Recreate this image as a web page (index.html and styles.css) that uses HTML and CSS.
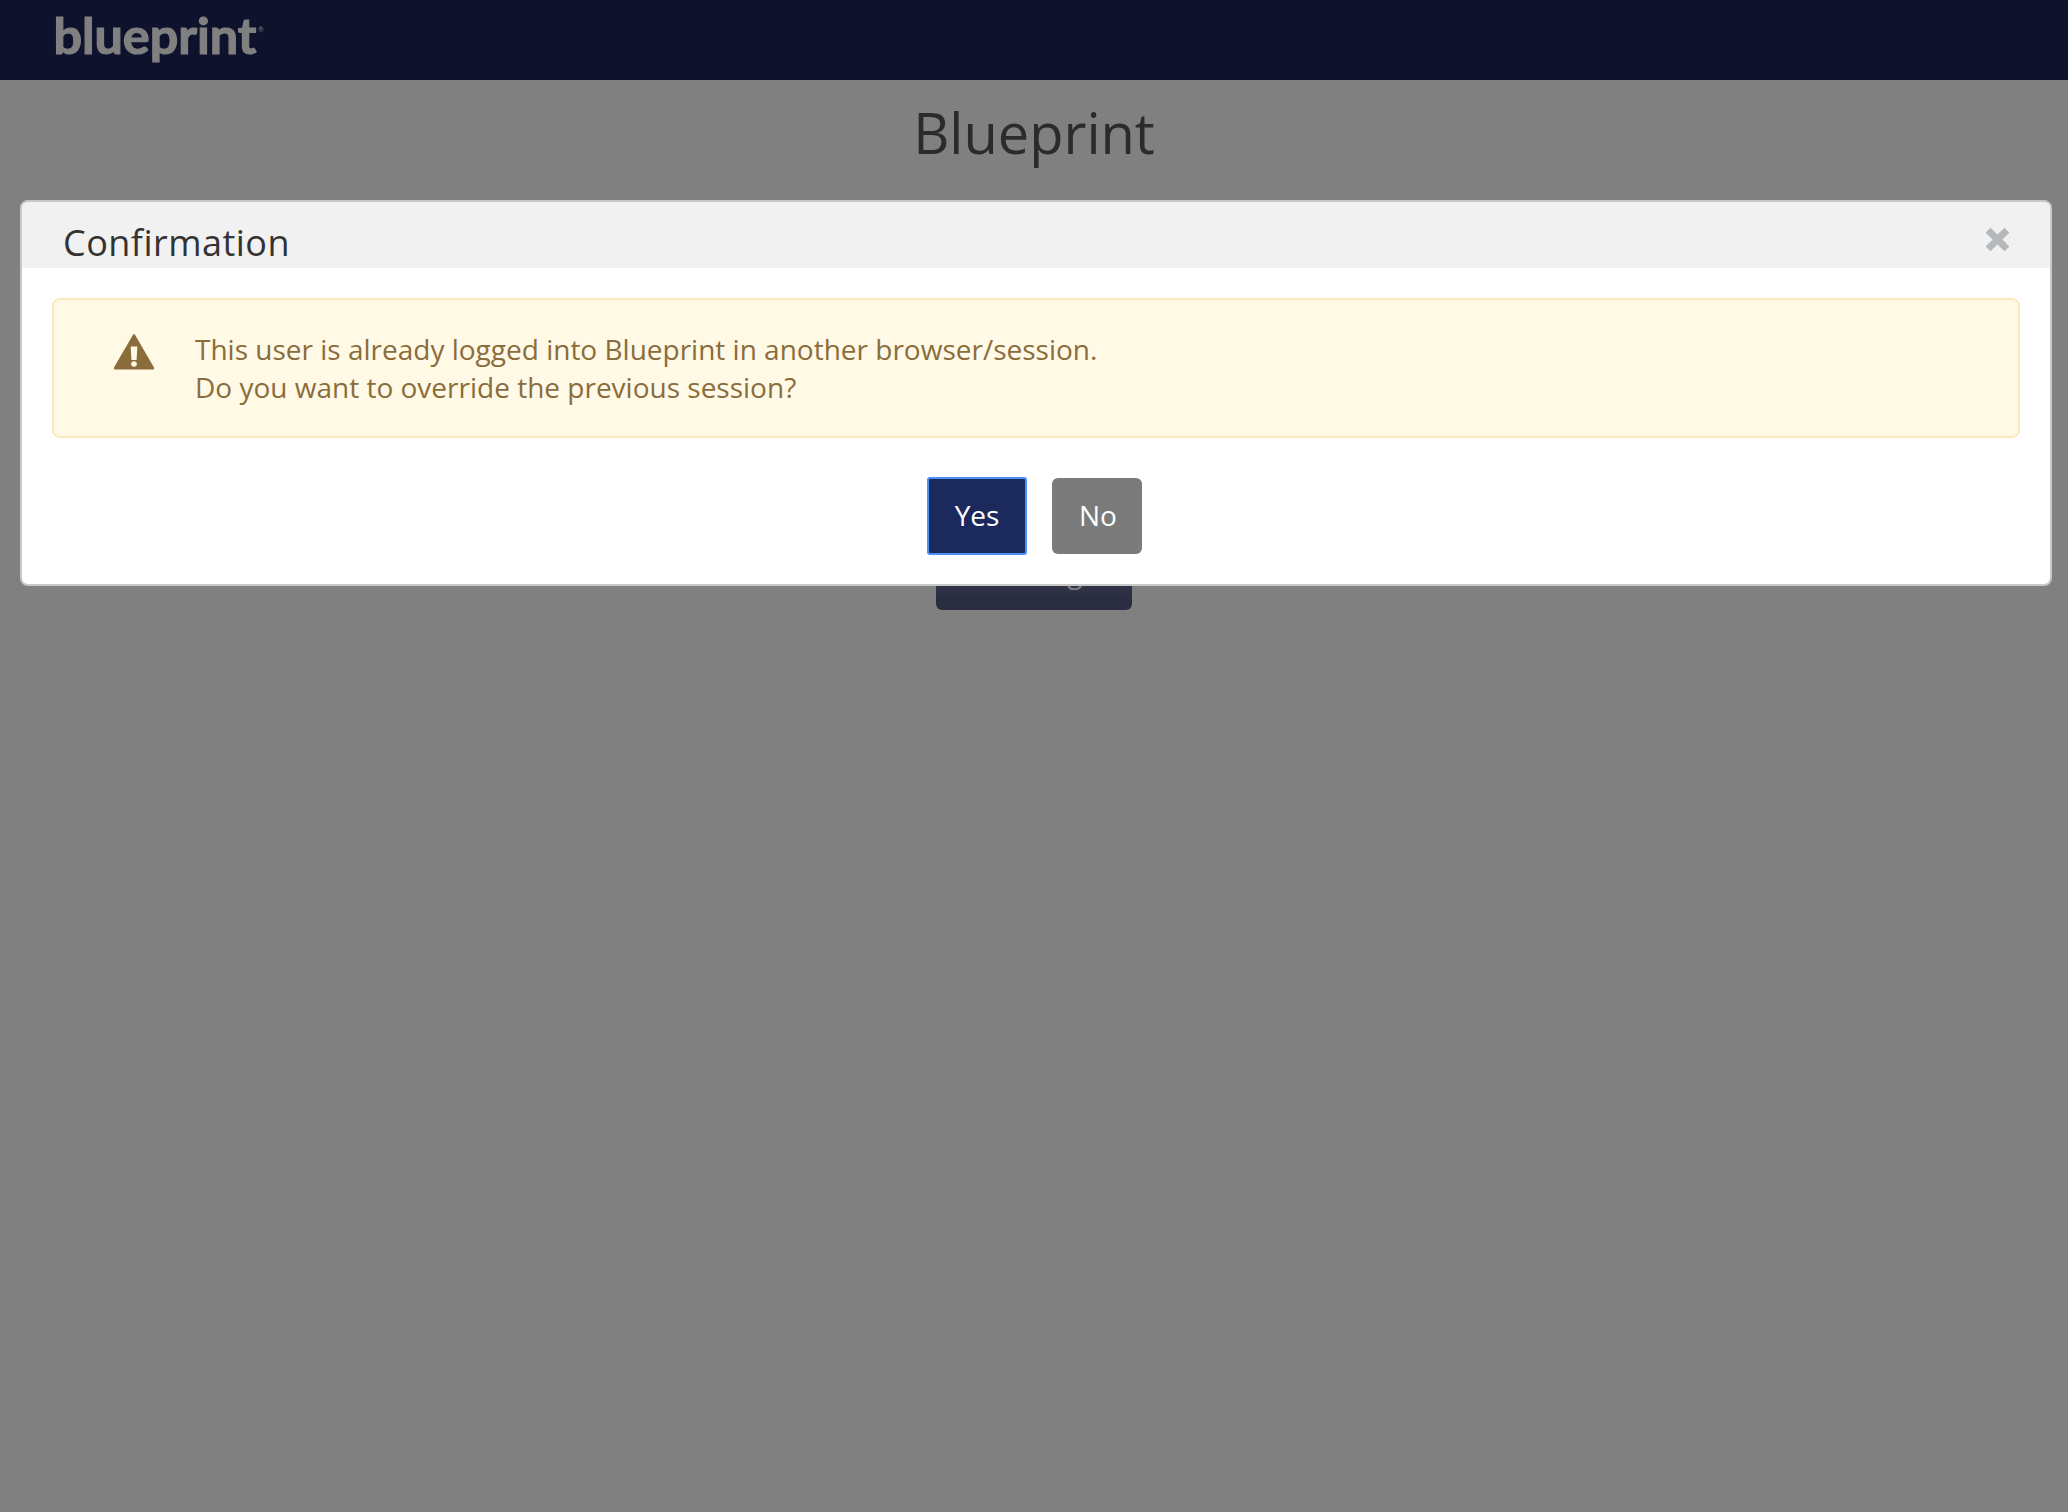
FILE: index.html
```html
<!DOCTYPE html>
<html lang="en">
<head>
<meta charset="utf-8">
<title>Blueprint</title>
<link rel="stylesheet" href="styles.css">
</head>
<body>
<header class="topbar">
  <svg class="logo" width="220" height="80" viewBox="0 0 220 80" role="img" aria-label="blueprint">
    <text class="logo-word" x="9.5" y="53.5" textLength="203" lengthAdjust="spacingAndGlyphs">blueprint</text>
    <text class="logo-mark" x="217" y="32" text-anchor="middle">®</text>
  </svg>
</header>
<main class="page">
  <h1 class="title">Blueprint</h1>
  <button class="login" type="button">Go to Login</button>
</main>
<div class="overlay">
  <section class="modal" role="dialog" aria-modal="true">
    <div class="modal-head">
      <h2 class="modal-title">Confirmation</h2>
      <svg class="close" width="25" height="25" viewBox="0 0 24 24"><path d="M5.2 0.8 12 7.3 18.8 0.8 23.4 5.4 16.7 12 23.4 18.6 18.8 23.2 12 16.7 5.2 23.2 0.6 18.6 7.3 12 0.6 5.4Z"/></svg>
    </div>
    <div class="modal-body">
      <div class="alert">
        <svg class="warn" width="42" height="36" viewBox="0 0 42 36">
          <path class="warn-shape" d="M20 .8Q21-.6 22 .8L41 33.5Q41.5 35.5 40 35.5H2Q.5 35.5 1 33.5Z"/>
          <path class="warn-hole" d="M17.7 12.5H24.3L23.6 26H18.4Z"/>
          <circle class="warn-hole" cx="21" cy="30" r="2.8"/>
        </svg>
        <p class="message">This user is already logged into Blueprint in another browser/session.<br>Do you want to override the previous session?</p>
      </div>
      <div class="actions">
        <button class="btn yes" type="button">Yes</button>
        <button class="btn no" type="button">No</button>
      </div>
    </div>
  </section>
</div>
</body>
</html>
```
FILE: styles.css
```css
* { box-sizing: border-box; }
body {
  margin: 0;
  min-height: 1512px;
  background: #808080;
  color: #2b2b2b;
  font-family: "Open Sans", sans-serif;
}
.topbar { height: 80px; padding-left: 44px; background: #0e122d; }
.logo { display: block; overflow: visible; fill: #808080; }
.logo-word { font: 700 50px Lato, sans-serif; stroke: #808080; stroke-width: 1.2px; }
.logo-mark { font: 7px Lato, sans-serif; }
.page { display: flex; flex-direction: column; align-items: center; }
.title { margin: 14px 0 0; font-size: 56px; font-weight: 400; line-height: 76px; }
.login {
  width: 196px;
  height: 76px;
  margin: 364px 0 0;
  padding: 0 4px 0 0;
  border: 0;
  border-radius: 6px;
  background: linear-gradient(#4a4c5c, #2b2d41 85%);
  color: #808080;
  font: 28px "Open Sans", sans-serif;
}
.overlay { position: absolute; inset: 0; padding: 200px 16px 0 20px; }
.modal {
  height: 386px;
  border: 2px solid #c8c8c8;
  border-radius: 8px;
  background: #fff;
  overflow: hidden;
}
.modal-head {
  display: flex;
  justify-content: space-between;
  height: 66px;
  padding: 16px 40px 0 41px;
  background: #f1f1f1;
}
.modal-title {
  margin: 0;
  color: #333;
  font-size: 36px;
  font-weight: 400;
  line-height: 49px;
  letter-spacing: .48px;
}
.close { margin-top: 9px; fill: #b5b9bc; }
.modal-body { padding: 30px; }
.alert {
  display: flex;
  gap: 40px;
  height: 140px;
  padding: 34px 59px;
  border: 2px solid #f8eaba;
  border-radius: 8px;
  background: #fff9e6;
  color: #8a6d3b;
}
.warn { flex: none; }
.warn-shape { fill: #8a6d3b; }
.warn-hole { fill: #fff9e6; }
.message { margin: -4px 0 0; font-size: 28px; line-height: 38px; }
.actions { display: flex; justify-content: center; gap: 26px; padding: 40px 2px 0 0; }
.btn {
  height: 76px;
  padding: 0 0 2px;
  border: 0;
  border-radius: 6px;
  color: #fff;
  font: 28px "Open Sans", sans-serif;
}
.yes { width: 98px; border-radius: 2px; background: #1c295c; outline: 2px solid #4b91fb; outline-offset: -1px; }
.no { width: 90px; padding-left: 2px; background: #7b7b7b; }
```
